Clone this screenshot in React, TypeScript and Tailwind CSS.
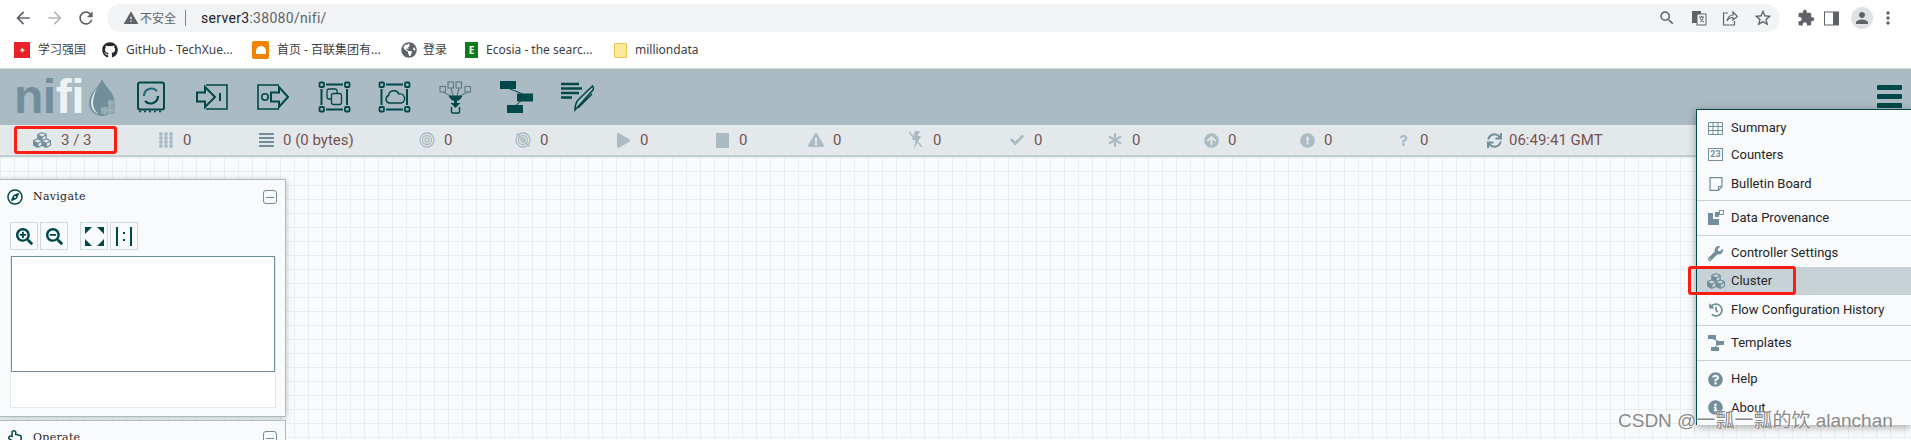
import { FaCubes, FaPlay, FaExclamationTriangle, FaCheck, FaAsterisk, FaArrowCircleUp, FaExclamationCircle, FaQuestion, FaSync, FaWrench, FaHistory, FaQuestionCircle, FaInfoCircle, FaGithub, FaGlobeAmericas, FaSearch, FaRegCompass, FaRegHandPointUp, FaSearchPlus, FaSearchMinus } from 'react-icons/fa';
import { MdArrowBack, MdArrowForward, MdRefresh, MdSearch, MdStarBorder, MdWarning, MdPerson, MdMoreVert, MdExtension } from 'react-icons/md';

const teal = '#004849';

function Processor() {
  return (
    <svg width="30" height="32" viewBox="0 0 30 32" fill="none" stroke={teal}>
      <rect x="2" y="1.5" width="26" height="27" rx="2" strokeWidth="2" />
      <path d="M8 15a7.5 7.5 0 0 1 13-5" strokeWidth="2.2" stroke="#1f6a70" />
      <path d="M22 15a7.5 7.5 0 0 1-13 5" strokeWidth="2.2" />
      <path d="M3 30.5h25" strokeWidth="1.5" strokeDasharray="2 3" />
    </svg>
  );
}

function InputPort() {
  return (
    <svg width="32" height="26" viewBox="0 0 32 26" fill="none" stroke={teal} strokeWidth="1.6">
      <path d="M10 1h21v24H10" />
      <path d="M1 8.5h8V3l10 10-10 10v-5.5H1z" strokeWidth="2" fill="#aabbc3" />
      <path d="M24 9v8" strokeWidth="2" />
    </svg>
  );
}

function OutputPort() {
  return (
    <svg width="32" height="26" viewBox="0 0 32 26" fill="none" stroke={teal} strokeWidth="1.6">
      <path d="M22 1H1v24h21" />
      <circle cx="8" cy="13" r="3.2" strokeWidth="1.6" />
      <path d="M14 8.5h8V3l9 10-9 10v-5.5h-8z" strokeWidth="2" fill="#aabbc3" />
    </svg>
  );
}

function GroupFrame({ children }: { children: React.ReactNode }) {
  return (
    <svg width="33" height="32" viewBox="0 0 33 32" fill="none" stroke={teal}>
      {[[1.5, 1.5], [27, 1.5], [1.5, 26], [27, 26]].map(([x, y]) => (
        <rect key={`${x}-${y}`} x={x} y={y} width="4.5" height="4.5" rx="1" strokeWidth="1.8" />
      ))}
      <path d="M8 3.5h17M8 28.5h17M3.5 8v16M29 8v16" strokeWidth="2" />
      {children}
    </svg>
  );
}

function Funnel() {
  return (
    <svg width="33" height="33" viewBox="0 0 33 33" fill="none" stroke={teal}>
      <g stroke="#5d7a82" strokeWidth="1.1">
        <rect x="1" y="5.5" width="5.5" height="5.5" />
        <rect x="9" y="1" width="5.5" height="6" />
        <rect x="17" y="1" width="5.5" height="6" />
        <rect x="26" y="5.5" width="5.5" height="5.5" />
        <path d="M4 11l8 4M12 7l2 8M20 7l-2 8M29 11l-8 4" />
      </g>
      <path d="M10 15h13l-3 4h-7z" fill={teal} strokeWidth="1" />
      <path d="M16.5 18v6" strokeWidth="3" />
      <path d="M11.5 22h10l-5 5z" fill={teal} stroke="none" />
      <path d="M12.5 26v5a1 1 0 0 0 1 1h6a1 1 0 0 0 1-1v-5" strokeWidth="1.4" />
    </svg>
  );
}

function Template() {
  return (
    <svg width="33" height="32" viewBox="0 0 33 32" fill={teal}>
      <rect x="0" y="0" width="16" height="8" />
      <rect x="17" y="12.5" width="16" height="8" />
      <rect x="7" y="24" width="16" height="8" />
      <path d="M10 8l13 5M21 20l-6 5" stroke={teal} strokeWidth="1" />
    </svg>
  );
}

function LabelIcon() {
  return (
    <svg width="33" height="30" viewBox="0 0 33 30" fill="none" stroke={teal}>
      <path d="M0 2h18M0 6.5h21M0 11h18M0 15.5h11" strokeWidth="2.4" />
      <path d="M14 28l18-20c1-2 0-3-.5-4L17 18c-1.5 2-3 7-3 10zm3-2l14-14" strokeWidth="1.5" />
    </svg>
  );
}

function DotGrid() {
  const rows = [2, 6, 10, 14];
  const cols = [3, 8, 13];
  return (
    <svg width="16" height="16" viewBox="0 0 16 16" fill="#aabbc3">
      {rows.flatMap((y) => cols.map((x) => <circle key={`${x}-${y}`} cx={x} cy={y} r="2" />))}
    </svg>
  );
}

function QueueList() {
  return (
    <svg width="15" height="14" viewBox="0 0 15 14" fill="#728e9b">
      <path d="M0 0h15v2H0zM0 4h15v2H0zM0 8h15v2H0zM0 12h15v2H0z" />
    </svg>
  );
}

function Target({ off }: { off?: boolean }) {
  return (
    <svg width="16" height="16" viewBox="0 0 16 16" fill="none" stroke="#aabbc3" strokeWidth="1.3">
      <circle cx="8" cy="8" r="7" />
      <circle cx="8" cy="8" r="4.5" />
      <circle cx="8" cy="8" r="2" />
      {off && <path d="M1.5 1.5l13 13" strokeWidth="1.6" />}
    </svg>
  );
}

function BoltOff() {
  return (
    <svg width="16" height="18" viewBox="0 0 16 18" fill="#aabbc3">
      <path d="M7 0h5L9.5 5H13L6 18l1.5-9H4z" />
      <path d="M1 1l13 15" stroke="#aabbc3" strokeWidth="1.4" />
    </svg>
  );
}

const statusItems = [
  { width: 'w-[100px]', icon: <DotGrid />, value: '0' },
  { width: 'w-[161px]', icon: <QueueList />, value: '0 (0 bytes)' },
  { width: 'w-[96px]', icon: <Target />, value: '0' },
  { width: 'w-[100px]', icon: <Target off />, value: '0' },
  { width: 'w-[99px]', icon: <FaPlay size={15} />, value: '0' },
  { width: 'w-[94px]', icon: <div className="h-[15px] w-[13px] bg-[#aabbc3]" />, value: '0' },
  { width: 'w-[100px]', icon: <FaExclamationTriangle size={16} />, value: '0' },
  { width: 'w-[101px]', icon: <BoltOff />, value: '0' },
  { width: 'w-[98px]', icon: <FaCheck size={14} />, value: '0' },
  { width: 'w-[96px]', icon: <FaAsterisk size={14} />, value: '0' },
  { width: 'w-[96px]', icon: <FaArrowCircleUp size={15} />, value: '0' },
  { width: 'w-[96px]', icon: <FaExclamationCircle size={15} />, value: '0' },
  { width: 'w-[92px]', icon: <FaQuestion size={11} />, value: '0' },
];

function Minimize() {
  return (
    <div className="flex h-[14px] w-[14px] items-center justify-center rounded-[3px] border border-[#728e9b]">
      <div className="h-px w-2 bg-[#728e9b]" />
    </div>
  );
}

function ToolButton({ children }: { children: React.ReactNode }) {
  return <div className="flex h-7 w-7 items-center justify-center border border-[#ccdadb] text-[#004849]">{children}</div>;
}

function MenuItem({ icon, label, className }: { icon: React.ReactNode; label: string; className: string }) {
  return (
    <div className={`flex items-center ${className}`}>
      <div className="flex w-[34px] justify-center pl-[3px] text-[#728e9b]">{icon}</div>
      <span>{label}</span>
    </div>
  );
}

export default function App() {
  return (
    <div className="relative h-[440px] w-[1911px] overflow-hidden bg-white font-['Roboto',sans-serif]">
      {/* browser toolbar */}
      <div className="flex h-8 items-end">
        <div className="flex h-7 w-[107px] items-center pl-[13px] text-[#5f6368]">
          <MdArrowBack size={20} />
          <MdArrowForward size={20} className="ml-[12px] text-[#b4b7ba]" />
          <MdRefresh size={20} className="ml-[11px]" />
        </div>
        <div className="flex h-7 w-[1673px] items-center rounded-full bg-[#f1f3f4] pl-4 pr-[7px]">
          <MdWarning size={16} className="text-[#5f6368]" />
          <span className="ml-[1px] font-['Noto_Sans_CJK_SC',sans-serif] text-[12px] text-[#5f6368]">不安全</span>
          <div className="ml-[9px] h-4 w-px bg-[#80868b]" />
          <span className="ml-[15px] text-[14px] tracking-[0.3px] text-[#202124]">
            server3<span className="text-[#5f6368]">:38080/nifi/</span>
          </span>
          <div className="ml-auto flex items-center gap-[15px] text-[#5f6368]">
            <MdSearch size={18} />
            <svg width="16" height="16" viewBox="0 0 16 16">
              <rect x="1" y="1" width="9" height="12" fill="#5f6368" />
              <rect x="6" y="4" width="9" height="11" fill="#f1f3f4" stroke="#5f6368" />
              <path d="M8 7h5M10.5 6v1M9 12c2-1 3-3 3-5M9 8c1 2 2 3 4 4" stroke="#5f6368" fill="none" />
            </svg>
            <svg width="16" height="16" viewBox="0 0 16 16" fill="none" stroke="#5f6368" strokeWidth="1.2">
              <path d="M6 3H1.5v12h11v-4" />
              <path d="M5 11c1-4 3-6 6-6V2l4.5 4.5L11 10V7.5c-2.500 0-4.500 1-6 3.500z" />
            </svg>
            <MdStarBorder size={20} />
          </div>
        </div>
        <div className="flex h-7 flex-1 items-center pl-[17px] text-[#5f6368]">
          <MdExtension size={18} />
          <svg className="ml-[9px]" width="15" height="15" viewBox="0 0 15 15">
            <rect x="0.500" y="1" width="14" height="13" fill="#fff" stroke="#5f6368" />
            <rect x="9" y="1" width="6" height="13" fill="#5f6368" />
          </svg>
          <div className="ml-[12px] flex h-[22px] w-[22px] items-center justify-center rounded-full bg-[#dfe1e5]">
            <MdPerson size={18} />
          </div>
          <MdMoreVert size={20} className="ml-[5px]" />
        </div>
      </div>

      {/* bookmarks */}
      <div className="flex h-[37px] items-center border-b border-[#d0d2d4] pl-[14px] font-['Noto_Sans','Noto_Sans_CJK_SC',sans-serif] text-[12px] text-[#3c4043]">
        <div className="flex h-4 w-4 items-center justify-center bg-[#e8202a] text-[8px] text-white">✦</div>
        <span className="ml-[8px] w-[64px]">学习强国</span>
        <FaGithub size={16} className="text-[#24292e]" />
        <span className="ml-[8px] w-[126px] whitespace-nowrap">GitHub - TechXue...</span>
        <div className="flex h-[18px] w-[17px] items-center justify-center rounded-[2px] bg-[#f08300]">
          <div className="h-2 w-2.5 rounded-t-full bg-white" />
        </div>
        <span className="ml-[8px] w-[124px] whitespace-nowrap">首页 - 百联集团有...</span>
        <FaGlobeAmericas size={16} className="text-[#5f6368]" />
        <span className="ml-[6px] w-[42px]">登录</span>
        <div className="flex h-4 w-[13px] items-center justify-center bg-[#0a7d1c] text-[10px] font-bold text-white">E</div>
        <span className="ml-[8px] w-[128px] whitespace-nowrap">Ecosia - the searc...</span>
        <div className="h-[15px] w-[13px] rounded-[1px] border border-[#eac54f] bg-[#fbe89b]" />
        <span className="ml-[8px]">milliondata</span>
      </div>

      {/* nifi header */}
      <div className="flex h-14 items-center bg-[#aabbc3] pl-[14px]">
        <div className="flex w-[122px] items-center">
          <span className="font-['Liberation_Sans',sans-serif] text-[48px] leading-[40px] font-bold tracking-[-0.5px]">
            <span className="text-[#728e9b]">ni</span>
            <span className="text-[#eef2f3]">fi</span>
          </span>
          <svg className="ml-[5px]" width="27" height="37" viewBox="0 0 27 37">
            <path d="M13 0c3 8 13 14 13 24a13 13 0 0 1-26 0C0 14 10 8 13 0z" fill="#728e9b" />
            <path d="M8 9C4 15 2 19 2 24c0 5 3 9 7 11-3-3-5-7-5-11 0-5 2-10 4-15z" fill="#dfe6e9" />
            <path d="M19 21h7v14h-14v-7h7z" fill="#8fa6b0" />
            <path d="M19 24h8M12 31h15M16 28v8M21 21v15" stroke="#aabbc3" strokeWidth="0.8" />
          </svg>
        </div>
        <div className="flex items-center">
          <div className="flex w-[60px]"><Processor /></div>
          <div className="flex w-[61px]"><InputPort /></div>
          <div className="flex w-[61px]"><OutputPort /></div>
          <div className="flex w-[60px]">
            <GroupFrame>
              <rect x="9" y="8" width="10" height="10" rx="2" strokeWidth="1.3" />
              <rect x="13.500" y="12.500" width="10" height="11" rx="2" strokeWidth="1.3" fill="#aabbc3" />
            </GroupFrame>
          </div>
          <div className="flex w-[61px]">
            <GroupFrame>
              <path d="M11 22a4 4 0 0 1-.500-7.500 5.500 5.500 0 0 1 10.500-1.500 4.500 4.500 0 0 1 2 9z" strokeWidth="1.500" />
            </GroupFrame>
          </div>
          <div className="flex w-[61px]"><Funnel /></div>
          <div className="flex w-[61px]"><Template /></div>
          <div className="flex"><LabelIcon /></div>
        </div>
        <div className="ml-auto mr-[9px] flex flex-col gap-1 self-start pt-4">
          <div className="h-[5px] w-[25px] rounded-[1px] bg-[#004849]" />
          <div className="h-[5px] w-[25px] rounded-[1px] bg-[#004849]" />
          <div className="h-[5px] w-[25px] rounded-[1px] bg-[#004849]" />
        </div>
      </div>

      {/* status bar */}
      <div className="relative z-10 flex h-8 items-center border-b-2 border-[#c3ced3] bg-[#e3e8eb] pl-[33px] text-[15px] text-[#775351]">
        <div className="flex w-[125px] items-center">
          <FaCubes size={18} className="text-[#728e9b]" />
          <span className="ml-[10px]">3 / 3</span>
        </div>
        {statusItems.map((item, i) => (
          <div key={i} className={`flex shrink-0 items-center ${item.width}`}>
            <div className="flex min-w-[16px] justify-center text-[#aabbc3]">{item.icon}</div>
            <span className="ml-[9px]">{item.value}</span>
          </div>
        ))}
        <div className="flex items-center">
          <FaSync size={15} className="text-[#728e9b]" />
          <span className="ml-[7px] whitespace-nowrap">06:49:41 GMT</span>
        </div>
        <FaSearch size={14} className="absolute top-[9px] left-[1864px] text-[#eef1f3]" />
      </div>

      {/* canvas */}
      <div className="h-[282px] bg-[#f9fafb] bg-[linear-gradient(#e8edef_1px,transparent_1px),linear-gradient(90deg,#e8edef_1px,transparent_1px)] bg-[length:14px_14px] pt-[22px]">
        <div className="h-[238px] w-[286px] border border-l-0 border-[#aabbc3] bg-[#f9fafb] shadow-[0_1px_6px_rgba(0,0,0,0.25)]">
          <div className="flex h-[34px] items-center pr-2 pl-[7px]">
            <FaRegCompass size={16} className="text-[#004849]" />
            <span className="ml-[10px] font-['DejaVu_Serif',serif] text-[11px] tracking-[0.3px] text-[#262626]">Navigate</span>
            <div className="ml-auto"><Minimize /></div>
          </div>
          <div className="mt-2 flex pl-[10px]">
            <ToolButton><FaSearchPlus size={17} /></ToolButton>
            <div className="ml-[2px]"><ToolButton><FaSearchMinus size={17} /></ToolButton></div>
            <div className="ml-[12px]">
              <ToolButton>
                <svg width="19" height="19" viewBox="0 0 19 19" fill="#004849">
                  <path d="M0 0h7L0 7zM19 0v7l-7-7zM0 19v-7l7 7zM19 19h-7l7-7z" />
                </svg>
              </ToolButton>
            </div>
            <div className="ml-[2px]">
              <ToolButton>
                <svg width="18" height="19" viewBox="0 0 18 19" fill="#004849">
                  <path d="M1 0h2v19H1zM15 0h2v19h-2zM8 5h2v2H8zM8 12h2v2H8z" />
                </svg>
              </ToolButton>
            </div>
          </div>
          <div className="mt-[6px] ml-[10px] w-[266px] border border-t-0 border-[#e3e8eb] bg-white">
            <div className="h-[116px] border-[1.5px] border-[#6d8fa1] bg-white" />
            <div className="h-[35px]" />
          </div>
        </div>
        <div className="mt-[3px] h-[40px] w-[286px] border border-l-0 border-[#aabbc3] bg-[#f9fafb]">
          <div className="flex h-[34px] items-center pr-2 pl-[7px]">
            <FaRegHandPointUp size={16} className="text-[#004849]" />
            <span className="ml-[10px] font-['DejaVu_Serif',serif] text-[11px] tracking-[0.3px] text-[#262626]">Operate</span>
            <div className="ml-auto"><Minimize /></div>
          </div>
        </div>
      </div>

      {/* global menu */}
      <div className="absolute top-[109px] left-[1696px] z-20 h-[316px] w-[215px] border-t border-l border-[#004849] bg-[#f9fafb] pt-[4px] text-[13px] text-[#262626] shadow-[0_2px_8px_rgba(0,0,0,0.35)]">
        <MenuItem
          className="h-7"
          label="Summary"
          icon={
            <svg width="15" height="13" viewBox="0 0 15 13" fill="none" stroke="#728e9b">
              <path d="M.5.500h14v12H.500zM.5 4.500h14M.5 8.500h14M5 .500v12M10 .500v12" />
            </svg>
          }
        />
        <MenuItem className="h-[25px]" label="Counters" icon={<div className="flex h-[13px] w-[15px] items-center justify-center border border-[#728e9b] text-[9px] leading-none font-bold">23</div>} />
        <MenuItem
          className="h-[33px]"
          label="Bulletin Board"
          icon={
            <svg width="14" height="14" viewBox="0 0 14 14" fill="none" stroke="#728e9b" strokeWidth="1.2">
              <path d="M1 .6h12v9l-3.500 3.800H1z" />
              <path d="M13 9.500H9.500v3.900" />
            </svg>
          }
        />
        <div className="h-px bg-[#c7d2d7]" />
        <MenuItem
          className="h-[34px]"
          label="Data Provenance"
          icon={
            <svg width="16" height="16" viewBox="0 0 16 16" fill="#728e9b">
              <path d="M0 3h5v6h6v6H0zM7 2h4v5H7z" />
              <path d="M11 0h5v5h-5zm1 1v3h3V1z" />
            </svg>
          }
        />
        <div className="h-px bg-[#c7d2d7]" />
        <MenuItem className="mt-[3px] h-7" icon={<FaWrench size={15} />} label="Controller Settings" />
        <MenuItem className="h-7 bg-[#c7d2d7]" icon={<FaCubes size={18} />} label="Cluster" />
        <MenuItem className="h-[30px]" icon={<FaHistory size={14} />} label="Flow Configuration History" />
        <div className="h-px bg-[#c7d2d7]" />
        <MenuItem
          className="h-[34px]"
          label="Templates"
          icon={
            <svg width="16" height="16" viewBox="0 0 16 16" fill="#728e9b">
              <path d="M0 0h8v4H0zM8 6h8v4H8zM3 12h8v4H3z" />
              <path d="M5 4l5 2M10 10l-3 2" stroke="#728e9b" />
            </svg>
          }
        />
        <div className="h-px bg-[#c7d2d7]" />
        <MenuItem className="h-[36px]" icon={<FaQuestionCircle size={15} />} label="Help" />
        <MenuItem className="h-[21px]" icon={<FaInfoCircle size={15} />} label="About" />
      </div>

      {/* red annotation boxes */}
      <div className="absolute top-[126px] left-[14px] z-30 h-[28px] w-[103px] rounded-[3px] border-[3px] border-[#fb1c12]" />
      <div className="absolute top-[266px] left-[1688px] z-30 h-[29px] w-[108px] rounded-[3px] border-[3px] border-[#fb1c12]" />

      {/* watermark */}
      <span className="absolute top-[407px] left-[1618px] z-30 font-['Liberation_Sans','Noto_Sans_CJK_SC',sans-serif] text-[19px] whitespace-nowrap text-[#8a8a8a] [text-shadow:0_0_2px_#fff]">
        CSDN @一瓢一瓢的饮 alanchan
      </span>
    </div>
  );
}
